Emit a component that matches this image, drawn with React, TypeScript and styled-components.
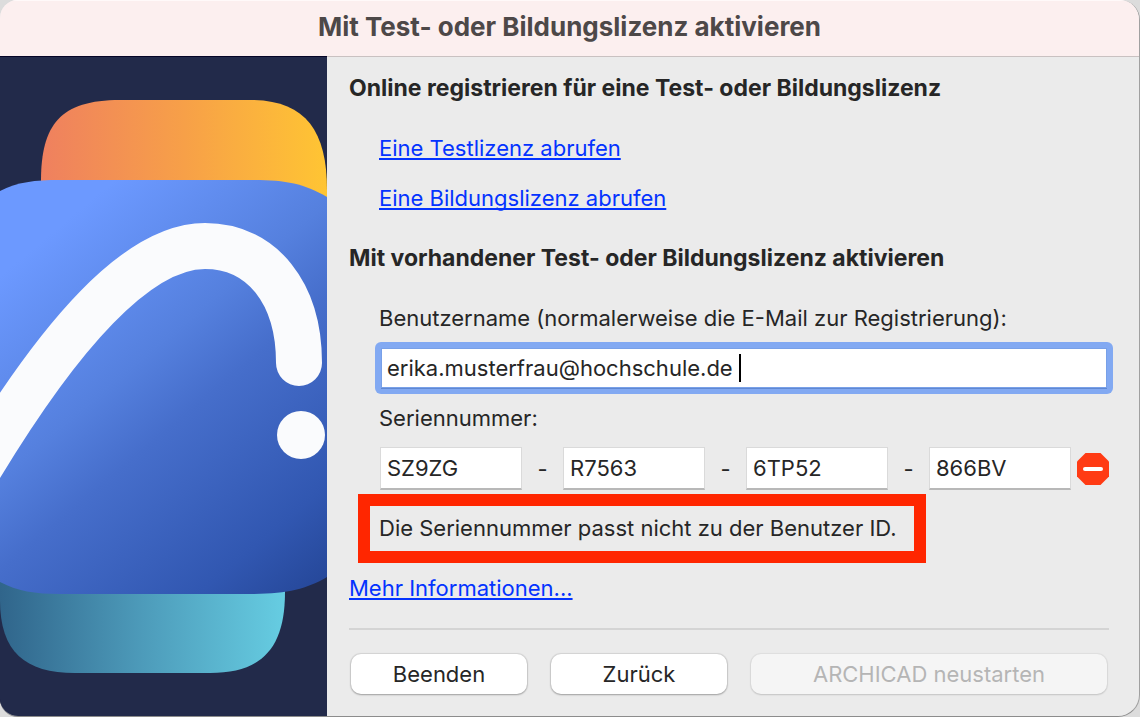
import React, { useState } from "react";
import styled, { createGlobalStyle, css } from "styled-components";

const GlobalStyle = createGlobalStyle`
  *, *::before, *::after { box-sizing: border-box; }
  body {
    margin: 0;
    background: #dcdcdc;
    color: #262626;
    font: 400 22px/30px Inter, "Liberation Sans", sans-serif;
  }
`;

const Window = styled.main`
  display: flex;
  flex-direction: column;
  min-height: calc(100vh - 1px);
  border-right: 1px solid #a0a0a0;
  border-bottom: 1px solid #8c8c8c;
  border-radius: 18px 20px 22px 18px;
  background: #ebebeb;
  overflow: hidden;
`;

const TitleBar = styled.header`
  display: flex;
  align-items: center;
  justify-content: center;
  height: 57px;
  padding-bottom: 3px;
  border-top: 1px solid #fff9f9;
  border-bottom: 1px solid #c9c1c1;
  background: #fcefef;
`;

const Title = styled.h1`
  margin: 0;
  color: #4d4848;
  font-size: 26px;
  font-weight: 700;
  line-height: 32px;
`;

const Content = styled.div`
  display: flex;
  flex: 1;
`;

const ArtPanel = styled.aside`
  flex: 0 0 327px;
  background: #222a4a;
  box-shadow: 0 -1px 0 #050527;
`;

const Artwork = styled.svg`
  display: block;
  width: 100%;
`;

const Panel = styled.form`
  display: flex;
  flex: 1;
  flex-direction: column;
  min-width: 0;
  padding: 16px 30px 20px 22px;
`;

const Heading = styled.h2`
  margin: 0;
  font-size: 23px;
  font-weight: 700;
  line-height: 30px;
`;

const Section = styled.section`
  display: flex;
  flex-direction: column;
  align-items: flex-start;
  padding-left: 30px;
`;

const LinkSection = styled(Section)`
  gap: 20px;
  padding-top: 30px;
  padding-bottom: 30px;
`;

const FormSection = styled(Section)`
  align-items: stretch;
  padding-top: 30px;
`;

const Link = styled.a`
  align-self: flex-start;
  color: #0433ff;
  text-decoration: underline;
  text-decoration-thickness: 2px;
  text-underline-offset: 2px;
  text-decoration-skip-ink: none;
`;

const fieldText = css`
  border: 0;
  border-radius: 0;
  background: #fff;
  color: #262626;
  font: inherit;
  outline: none;
`;

const FocusRing = styled.div`
  position: relative;
  margin: 9px -4px 9px;
  padding: 6px;
  border-radius: 6px;
  background: #82a9f2;
`;

const UserInput = styled.input`
  ${fieldText}
  display: block;
  width: 100%;
  height: 40px;
  padding: 0 5px;
  border: 1px solid #78a0e8;
  box-shadow: 0 1px 0 #6088d2;
  caret-color: transparent;
`;

const Caret = styled.span`
  position: absolute;
  top: 12px;
  left: 364px;
  width: 2px;
  height: 28px;
  background: #000;
`;

const SerialRow = styled.div`
  display: flex;
  align-items: center;
  padding: 14px 0 4px 1px;
`;

const SerialInput = styled.input`
  ${fieldText}
  flex: 1;
  width: 0;
  height: 43px;
  padding: 0 6px;
  border: 1px solid #dadada;
  border-bottom: 2px solid #b8b8b8;
`;

const Dash = styled.span`
  flex: 0 0 41px;
  text-align: center;
`;

const StopIcon = styled.svg`
  flex: 0 0 32px;
  height: 32px;
  margin-left: 6px;
`;

const ErrorBox = styled.p`
  align-self: flex-start;
  margin: 0 0 10px 9px;
  padding: 7px 17px 8px 9px;
  border: 12px solid #ff2600;
`;

const Separator = styled.hr`
  width: 100%;
  height: 2px;
  margin: 25px 0 24px;
  border: 0;
  background: #d4d4d4;
`;

const Actions = styled.footer`
  display: flex;
  gap: 24px;
  padding: 0 2px;
`;

const Button = styled.button<{ $wide?: boolean }>`
  flex: ${(p) => (p.$wide ? "1" : "0 0 176px")};
  height: 40px;
  padding: 0;
  border: 0;
  border-radius: 10px;
  background: #fff;
  box-shadow: 0 0 1px 1px #00000018, 0 1px 2px #00000040;
  color: #262626;
  font: inherit;

  &:disabled {
    background: #f5f5f5;
    box-shadow: 0 0 1px 1px #0000000d, 0 1px 2px #00000020;
    color: #b5b5b5;
  }
`;

const ArchicadArt = () => (
  <Artwork viewBox="0 57 327 659" aria-hidden="true">
    <defs>
      <linearGradient id="orange" gradientUnits="userSpaceOnUse" x1="41" y1="0" x2="327" y2="0">
        <stop offset="0" stopColor="#ef805f" />
        <stop offset="0.5" stopColor="#f7a048" />
        <stop offset="1" stopColor="#ffc533" />
      </linearGradient>
      <linearGradient id="blue" gradientUnits="userSpaceOnUse" x1="136" y1="162" x2="420" y2="500">
        <stop offset="0" stopColor="#6c99ff" />
        <stop offset="0.35" stopColor="#5580de" />
        <stop offset="0.51" stopColor="#466ecb" />
        <stop offset="0.84" stopColor="#3157b1" />
        <stop offset="1" stopColor="#26489a" />
      </linearGradient>
      <linearGradient id="teal" gradientUnits="userSpaceOnUse" x1="0" y1="0" x2="285" y2="0">
        <stop offset="0" stopColor="#30658b" />
        <stop offset="0.5" stopColor="#4d9bba" />
        <stop offset="1" stopColor="#66cde2" />
      </linearGradient>
    </defs>
    <path
      d="M41 230V181C41 125 60 100 120 100H250C305 100 327 130 327 190V230Z"
      fill="url(#orange)"
    />
    <path
      d="M0 560V600C0 652 25 673 75 673H210C262 673 285 648 285 592V560Z"
      fill="url(#teal)"
    />
    <path
      d="M0 191C17 182 35 180 60 180H250C285 180 303 183 327 197V577C305 590 285 594 245 594H60C35 594 17 591 0 582Z"
      fill="url(#blue)"
    />
    <path
      d="M-25 475C60 333 138 246 205 246C262 246 299 293 299 363"
      fill="none"
      stroke="#fafbfd"
      strokeWidth="46"
      strokeLinecap="round"
    />
    <circle cx="301" cy="435" r="24" fill="#fafbfd" />
  </Artwork>
);

const App = () => {
  const [user, setUser] = useState("erika.musterfrau@hochschule.de ");
  const [serial, setSerial] = useState(["SZ9ZG", "R7563", "6TP52", "866BV"]);

  const updateSerial = (index: number, value: string) =>
    setSerial(serial.map((part, i) => (i === index ? value : part)));

  return (
    <>
      <GlobalStyle />
      <Window>
        <TitleBar>
          <Title>Mit Test- oder Bildungslizenz aktivieren</Title>
        </TitleBar>
        <Content>
          <ArtPanel>
            <ArchicadArt />
          </ArtPanel>
          <Panel onSubmit={(e) => e.preventDefault()}>
            <Heading>Online registrieren für eine Test- oder Bildungslizenz</Heading>
            <LinkSection>
              <Link href="#testlizenz">Eine Testlizenz abrufen</Link>
              <Link href="#bildungslizenz">Eine Bildungslizenz abrufen</Link>
            </LinkSection>
            <Heading>Mit vorhandener Test- oder Bildungslizenz aktivieren</Heading>
            <FormSection>
              <label htmlFor="user">Benutzername (normalerweise die E-Mail zur Registrierung):</label>
              <FocusRing>
                <UserInput id="user" value={user} onChange={(e) => setUser(e.target.value)} />
                <Caret />
              </FocusRing>
              <label htmlFor="serial-0">Seriennummer:</label>
              <SerialRow>
                {serial.map((part, i) => (
                  <React.Fragment key={i}>
                    {i > 0 && <Dash>-</Dash>}
                    <SerialInput
                      id={`serial-${i}`}
                      aria-label={`Seriennummer ${i + 1}`}
                      value={part}
                      onChange={(e) => updateSerial(i, e.target.value)}
                    />
                  </React.Fragment>
                ))}
                <StopIcon viewBox="0 0 32 32" aria-hidden="true">
                  <path d="M8.500 0h15l8.500 8.500v15l-8.500 8.500h-15L0 23.500v-15z" fill="#ff3b14" />
                  <rect x="6" y="14" width="20" height="4" rx="2" fill="#fff" />
                </StopIcon>
              </SerialRow>
            </FormSection>
            <ErrorBox role="alert">Die Seriennummer passt nicht zu der Benutzer ID.</ErrorBox>
            <Link href="#informationen">Mehr Informationen...</Link>
            <Separator />
            <Actions>
              <Button type="button">Beenden</Button>
              <Button type="button">Zurück</Button>
              <Button type="submit" $wide disabled>
                ARCHICAD neustarten
              </Button>
            </Actions>
          </Panel>
        </Content>
      </Window>
    </>
  );
};

export default App;
